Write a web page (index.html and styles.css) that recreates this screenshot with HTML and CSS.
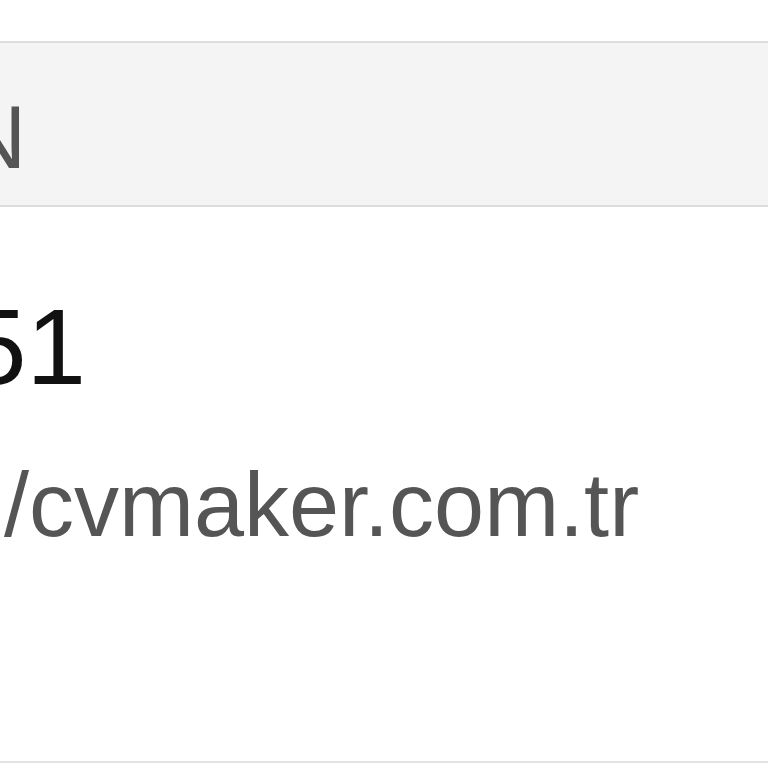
FILE: index.html
```html
<!DOCTYPE html>
<html>
<head>
<meta charset="utf-8">
<link rel="stylesheet" href="styles.css">
</head>
<body>
<div class="page">
  <div class="topgap"></div>
  <div class="panel">
    <div class="panel-head"><span class="head-text">N</span></div>
    <div class="panel-body">
      <div class="phone"><span class="phone-text">51</span></div>
      <div class="url"><span class="url-text">/cvmaker.com.tr</span></div>
    </div>
  </div>
</div>
</body>
</html>
```
FILE: styles.css
```css
html, body {
  margin: 0;
  padding: 0;
  background: #ffffff;
  overflow: hidden;
}
.page {
  width: 768px;
  height: 768px;
  font-family: "Liberation Sans", Arial, Helvetica, sans-serif;
  overflow: hidden;
}
.topgap {
  height: 41px;
}
.panel {
  border-top: 2px solid #dddddd;
  border-bottom: 2px solid #e2e2e2;
}
.panel-head {
  background: #f4f4f4;
  height: 164px;
  border-bottom: 2px solid #dcdcdc;
  box-sizing: border-box;
  padding-top: 50px;
  white-space: nowrap;
}
.head-text {
  display: block;
  font-size: 89px;
  line-height: 89px;
  color: #555555;
  margin-left: -38px;
}
.panel-body {
  padding-top: 87px;
  height: 554px;
  box-sizing: border-box;
  white-space: nowrap;
}
.phone {
  font-size: 107px;
  line-height: 107px;
  color: #111111;
  margin-left: -33px;
}
.url {
  margin-top: 59px;
  font-size: 90px;
  line-height: 90px;
  color: #555555;
  margin-left: 4px;
}
```
